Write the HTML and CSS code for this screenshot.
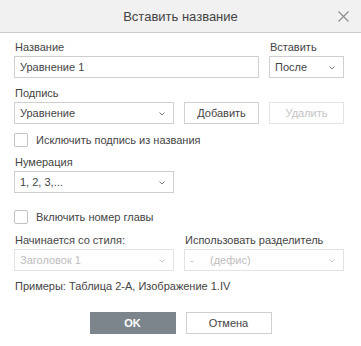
FILE: index.html
```html
<!DOCTYPE html>
<html lang="ru">
<head>
    <meta charset="UTF-8">
    <meta name="viewport" content="width=device-width, initial-scale=1.0">
    <title>Вставить название</title>
    <link rel="stylesheet" href="styles.css">
</head>
<body>
    <div class="dialog">
        <div class="header">
            <span class="title">Вставить название</span>
            <svg class="close" width="11" height="11" viewBox="0 0 11 11">
                <path d="M0.5 0.5 L10.5 10.5 M10.5 0.5 L0.5 10.5" stroke="#8c8c8c" stroke-width="1.1" fill="none"/>
            </svg>
        </div>
        <div class="body">
            <div class="row">
                <div class="field wide">
                    <div class="label">Название</div>
                    <div class="input">Уравнение 1</div>
                </div>
                <div class="field small">
                    <div class="label">Вставить</div>
                    <div class="select">После
                        <svg class="arrow" width="6" height="4" viewBox="0 0 6 4"><path d="M0.5 0.5 L3 3 L5.5 0.5" stroke="#7a7a7a" fill="none"/></svg>
                    </div>
                </div>
            </div>

            <div class="label gap-top">Подпись</div>
            <div class="row">
                <div class="select half">Уравнение
                    <svg class="arrow" width="6" height="4" viewBox="0 0 6 4"><path d="M0.5 0.5 L3 3 L5.5 0.5" stroke="#7a7a7a" fill="none"/></svg>
                </div>
                <button class="btn">Добавить</button>
                <button class="btn disabled">Удалить</button>
            </div>

            <label class="check first-check"><span class="box"></span>Исключить подпись из названия</label>

            <div class="label num-label">Нумерация</div>
            <div class="select half">1, 2, 3,...
                <svg class="arrow" width="6" height="4" viewBox="0 0 6 4"><path d="M0.5 0.5 L3 3 L5.5 0.5" stroke="#7a7a7a" fill="none"/></svg>
            </div>

            <label class="check second-check"><span class="box"></span>Включить номер главы</label>

            <div class="row chapter">
                <div class="field half">
                    <div class="label">Начинается со стиля:</div>
                    <div class="select off">Заголовок 1
                        <svg class="arrow" width="6" height="4" viewBox="0 0 6 4"><path d="M0.5 0.5 L3 3 L5.5 0.5" stroke="#c8c8c8" fill="none"/></svg>
                    </div>
                </div>
                <div class="field rest">
                    <div class="label">Использовать разделитель</div>
                    <div class="select off"><span class="dash">-</span>(дефис)
                        <svg class="arrow" width="6" height="4" viewBox="0 0 6 4"><path d="M0.5 0.5 L3 3 L5.5 0.5" stroke="#c8c8c8" fill="none"/></svg>
                    </div>
                </div>
            </div>

            <div class="example">Примеры: Таблица 2-А, Изображение 1.IV</div>

            <div class="footer">
                <button class="btn primary">OK</button>
                <button class="btn cancel">Отмена</button>
            </div>
        </div>
    </div>
</body>
</html>
```

FILE: styles.css
```css
body {
    margin: 0;
    font-family: "Liberation Sans", Arial, sans-serif;
    font-size: 11px;
    color: #444;
    background-color: #fff;
}

.dialog {
    width: 361px;
    height: 346px;
    background-color: #fff;
}

.header {
    position: relative;
    height: 32px;
    background-color: #f1f1f1;
    border-bottom: 1px solid #cbcbcb;
    display: flex;
    align-items: center;
    justify-content: center;
}

.title {
    font-size: 13px;
    color: #444;
}

.close {
    position: absolute;
    right: 12px;
    top: 11px;
}

.body {
    padding: 8px 17px 0 14px;
}

.row {
    display: flex;
    gap: 10px;
}

.field {
    display: flex;
    flex-direction: column;
}

.wide {
    width: 245px;
}

.small {
    width: 75px;
}

.half {
    width: 160px;
}

.rest {
    width: 160px;
}

.label {
    line-height: 13px;
    margin-bottom: 2px;
    padding-left: 1px;
}

.gap-top {
    margin-top: 9px;
}

.input,
.select {
    box-sizing: border-box;
    height: 22px;
    border: 1px solid #cfcfcf;
    padding: 0 5px;
    line-height: 20px;
    position: relative;
    color: #444;
}

.select .arrow {
    position: absolute;
    right: 8px;
    top: 9px;
}

.select.off {
    color: #bdbdbd;
    border-color: #e3e3e3;
}

.dash {
    display: inline-block;
    width: 20px;
}

.btn {
    box-sizing: border-box;
    width: 75px;
    height: 22px;
    border: 1px solid #cfcfcf;
    background-color: #fff;
    font-family: "Liberation Sans", Arial, sans-serif;
    font-size: 11px;
    color: #444;
    padding: 0;
    cursor: pointer;
}

.btn.disabled {
    color: #c4c4c4;
    border-color: #e4e4e4;
}

.check {
    display: flex;
    align-items: center;
    height: 14px;
    line-height: 14px;
}

.box {
    box-sizing: border-box;
    width: 14px;
    height: 14px;
    border: 1px solid #c3c3c3;
    border-radius: 2px;
    margin-right: 8px;
    background-color: #fff;
}

.first-check {
    margin-top: 9px;
}

.num-label {
    margin-top: 9px;
}

.second-check {
    margin-top: 17px;
}

.chapter {
    margin-top: 10px;
}

.example {
    margin-top: 9px;
    line-height: 13px;
    padding-left: 1px;
}

.footer {
    display: flex;
    justify-content: center;
    gap: 10px;
    margin-top: 19px;
    padding-left: 3px;
}

.btn.primary {
    width: 86px;
    background-color: #7d858c;
    border-color: #7d858c;
    color: #fff;
    font-weight: bold;
}

.btn.cancel {
    width: 86px;
}
```
